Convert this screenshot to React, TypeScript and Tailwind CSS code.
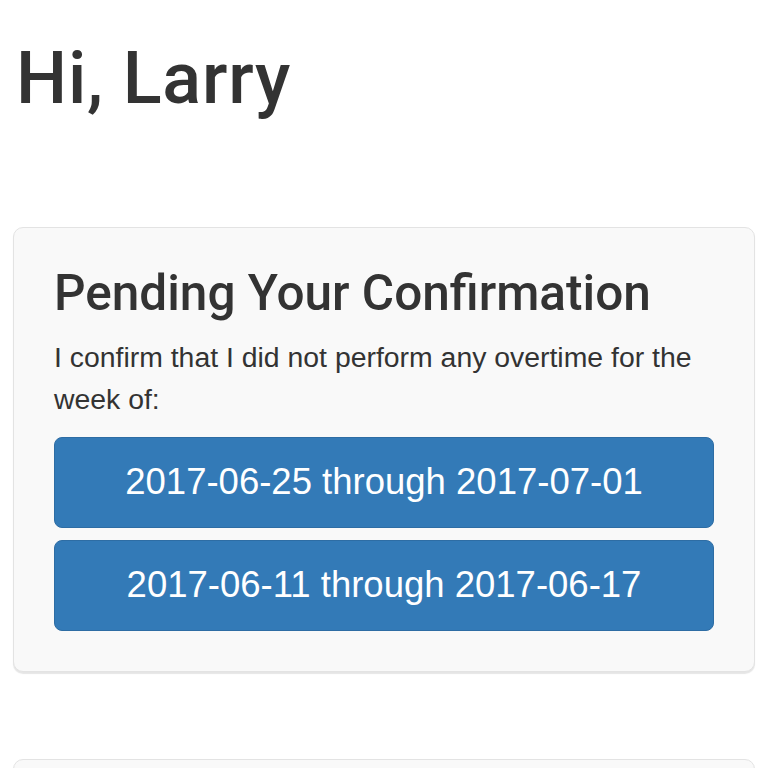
export default function App() {
  const weeks = ["2017-06-25 through 2017-07-01", "2017-06-11 through 2017-06-17"];
  return (
    <div className="min-h-[768px] bg-white px-[13px] text-[#333] [font-family:'Liberation_Sans',Arial,sans-serif]">
      <h1 className="pt-[39px] pl-[3px] text-[72px] leading-[1.1] font-medium tracking-[0.8px] [font-family:Roboto,'Liberation_Sans',sans-serif]">
        Hi, Larry
      </h1>

      <div className="mt-[109px] rounded-[10px] border border-[#e3e3e3] bg-[#f9f9f9] px-[40px] pt-[37px] pb-[40px] shadow-[0_2px_1px_rgba(0,0,0,0.1)]">
        <h2 className="text-[49.5px] leading-[57px] font-medium [font-family:Roboto,'Liberation_Sans',sans-serif]">
          Pending Your Confirmation
        </h2>
        <p className="mt-[14px] text-[28.4px] leading-[42px]">
          I confirm that I did not perform any overtime for the week of:
        </p>
        <div className="mt-[17px] flex flex-col gap-[12px]">
          {weeks.map((w) => (
            <button
              key={w}
              className="flex h-[91px] w-full items-center justify-center rounded-[8px] border border-[#2e6da4] bg-[#337ab7] text-[36.5px] text-white"
            >
              {w}
            </button>
          ))}
        </div>
      </div>

      <div className="mt-[87px] h-[100px] rounded-[10px] border border-[#e3e3e3] bg-[#f9f9f9]" />
    </div>
  );
}
